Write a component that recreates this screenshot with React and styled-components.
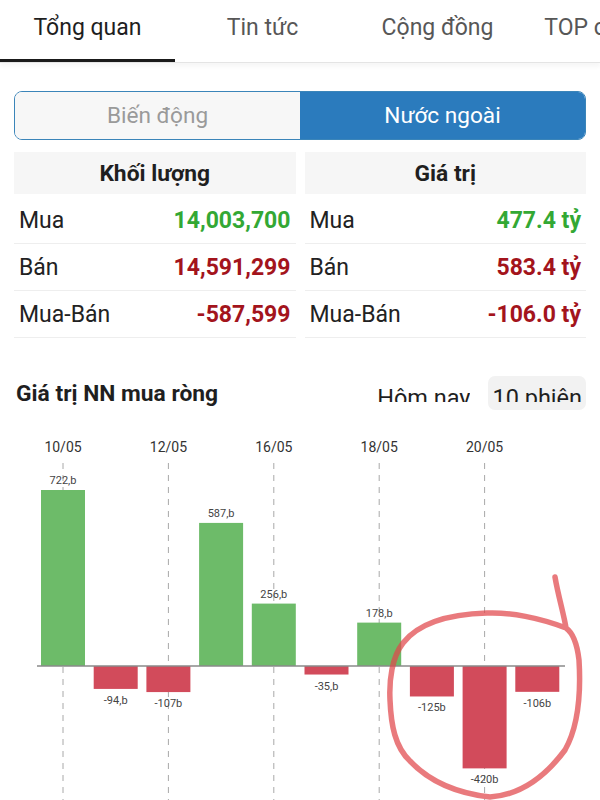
import React from 'react'
import styled, { createGlobalStyle } from 'styled-components'

const GlobalStyle = createGlobalStyle`
  body {
    margin: 0;
    background: #ffffff;
    font-family: Roboto, "Noto Sans", "Liberation Sans", sans-serif;
    color: #222;
  }
`

const Page = styled.div`
  width: 600px;
  height: 800px;
  overflow: hidden;
  background: #fff;
`

const TabBar = styled.div`
  display: flex;
  height: 62px;
  border-bottom: 1px solid #e4e4e4;
  box-shadow: 0 4px 4px rgba(0, 0, 0, 0.035);
  overflow: hidden;
`

const Tab = styled.div`
  position: relative;
  flex: 0 0 175px;
  text-align: center;
  line-height: 56px;
  font-size: 23px;
  white-space: nowrap;
  color: ${(p) => (p.$active ? '#1e1e1e' : '#575757')};

  &::after {
    content: '';
    display: ${(p) => (p.$active ? 'block' : 'none')};
    position: absolute;
    left: 0;
    right: 0;
    bottom: 0;
    height: 3px;
    background: #1a1a1a;
  }
`

const Body = styled.div`
  padding: 0 14px;
`

const Segmented = styled.div`
  margin-top: 28px;
  height: 49px;
  display: grid;
  grid-template-columns: 1fr 1fr;
  border: 1.5px solid #3b85b9;
  border-radius: 8px;
  overflow: hidden;
  box-sizing: border-box;
`

const Segment = styled.div`
  display: flex;
  align-items: center;
  justify-content: center;
  font-size: 22.6px;
  background: ${(p) => (p.$active ? '#2b7bbd' : '#f7f7f7')};
  color: ${(p) => (p.$active ? '#ffffff' : '#9a9a9a')};
`

const StatsGrid = styled.div`
  margin-top: 12px;
  display: grid;
  grid-template-columns: 1fr 1fr;
  column-gap: 9px;
`

const StatsColumn = styled.div`
  display: flex;
  flex-direction: column;
`

const ColumnHead = styled.div`
  height: 42px;
  margin-bottom: 3px;
  display: flex;
  align-items: center;
  justify-content: center;
  background: #f6f6f6;
  font-size: 22.8px;
  font-weight: 700;
  color: #1f1f1f;
`

const StatRow = styled.div`
  height: 47px;
  box-sizing: border-box;
  border-bottom: 1px solid #eeeeee;
  display: flex;
  align-items: center;
  justify-content: space-between;
  padding: 0 5px;
  font-size: 23px;
`

const StatLabel = styled.span`
  color: #222;
`

const StatValue = styled.span`
  font-weight: 700;
  color: ${(p) => (p.$tone === 'up' ? '#33a834' : '#a3141c')};
`

const ChartHeader = styled.div`
  margin-top: 38px;
  height: 34px;
  display: flex;
  align-items: center;
  padding-left: 2px;
`

const ChartTitle = styled.div`
  flex: 1;
  font-size: 22.8px;
  font-weight: 700;
  color: #1f1f1f;
`

const Toggles = styled.div`
  display: flex;
  align-items: flex-start;
  gap: 14px;
  height: 34px;
`

const Toggle = styled.div`
  height: 34px;
  padding: 0 4px;
  border-radius: 7px;
  background: ${(p) => (p.$active ? '#f2f2f2' : 'transparent')};
`

const ToggleText = styled.span`
  display: block;
  height: 26px;
  overflow: hidden;
  font-size: 23.5px;
  line-height: 44px;
  color: #1f1f1f;
  white-space: nowrap;
`

const ChartWrap = styled.div`
  margin-top: 15px;
  height: 375px;
`

const stats = [
  {
    head: 'Khối lượng',
    rows: [
      ['Mua', '14,003,700', 'up'],
      ['Bán', '14,591,299', 'down'],
      ['Mua-Bán', '-587,599', 'down'],
    ],
  },
  {
    head: 'Giá trị',
    rows: [
      ['Mua', '477.4 tỷ', 'up'],
      ['Bán', '583.4 tỷ', 'down'],
      ['Mua-Bán', '-106.0 tỷ', 'down'],
    ],
  },
]

const bars = [
  { v: 722, label: '722,b', date: '10/05' },
  { v: -94, label: '-94,b' },
  { v: -107, label: '-107b', date: '12/05' },
  { v: 587, label: '587,b' },
  { v: 256, label: '256,b', date: '16/05' },
  { v: -35, label: '-35,b' },
  { v: 178, label: '178,b', date: '18/05' },
  { v: -125, label: '-125b' },
  { v: -420, label: '-420b', date: '20/05' },
  { v: -106, label: '-106b' },
]

const ZERO = 241
const SCALE = 176 / 722
const BAR_W = 44
const STEP = 52.7
const START = 41

const NetChart = () => (
  <svg width="600" height="375" viewBox="0 0 600 375">
    {bars.map((b, i) => {
      const cx = START + i * STEP + BAR_W / 2
      if (!b.date) return null
      return (
        <g key={'d' + i}>
          <text x={cx} y={27} textAnchor="middle" fontSize="14" fill="#333" fontFamily="Roboto, sans-serif">
            {b.date}
          </text>
          <line x1={cx} y1={38} x2={cx} y2={375} stroke="#a8a8a8" strokeWidth="1" strokeDasharray="6 6" />
        </g>
      )
    })}
    {bars.map((b, i) => {
      const x = START + i * STEP
      const h = Math.abs(b.v) * SCALE
      const up = b.v > 0
      const y = up ? ZERO - h : ZERO
      return (
        <g key={'b' + i}>
          <rect x={x} y={y} width={BAR_W} height={h} fill={up ? '#6dbb69' : '#d24b5b'} />
          <text
            x={x + BAR_W / 2}
            y={up ? y - 6 : ZERO + h + 15}
            textAnchor="middle"
            fontSize="11"
            fill="#444"
            fontFamily="Roboto, sans-serif"
          >
            {b.label}
          </text>
        </g>
      )
    })}
    <line x1="37" y1={ZERO} x2="565" y2={ZERO} stroke="#8a8a8a" strokeWidth="1.5" />
    {/* hand-drawn annotation from the screenshot */}
    <path
      d="M 555 152 C 558 170, 564 190, 566 203
         C 540 193, 510 187, 487 188
         C 455 189, 420 196, 403 218
         C 392 232, 389 255, 390 275
         C 391 300, 395 322, 410 336
         C 428 355, 455 368, 490 372
         C 520 370, 545 352, 565 325
         C 578 302, 581 268, 579 235
         C 577 218, 573 208, 566 203"
      fill="none"
      stroke="#e0474b"
      strokeOpacity="0.72"
      strokeWidth="5.5"
      strokeLinecap="round"
      strokeLinejoin="round"
    />
  </svg>
)

const App = () => (
  <Page>
    <GlobalStyle />
    <TabBar>
      <Tab $active>Tổng quan</Tab>
      <Tab>Tin tức</Tab>
      <Tab>Cộng đồng</Tab>
      <Tab>TOP cổ phiếu</Tab>
    </TabBar>
    <Body>
      <Segmented>
        <Segment>Biến động</Segment>
        <Segment $active>Nước ngoài</Segment>
      </Segmented>
      <StatsGrid>
        {stats.map((col) => (
          <StatsColumn key={col.head}>
            <ColumnHead>{col.head}</ColumnHead>
            {col.rows.map(([label, value, tone]) => (
              <StatRow key={label}>
                <StatLabel>{label}</StatLabel>
                <StatValue $tone={tone}>{value}</StatValue>
              </StatRow>
            ))}
          </StatsColumn>
        ))}
      </StatsGrid>
      <ChartHeader>
        <ChartTitle>Giá trị NN mua ròng</ChartTitle>
        <Toggles>
          <Toggle>
            <ToggleText>Hôm nay</ToggleText>
          </Toggle>
          <Toggle $active>
            <ToggleText>10 phiên</ToggleText>
          </Toggle>
        </Toggles>
      </ChartHeader>
    </Body>
    <ChartWrap>
      <NetChart />
    </ChartWrap>
  </Page>
)

export default App
